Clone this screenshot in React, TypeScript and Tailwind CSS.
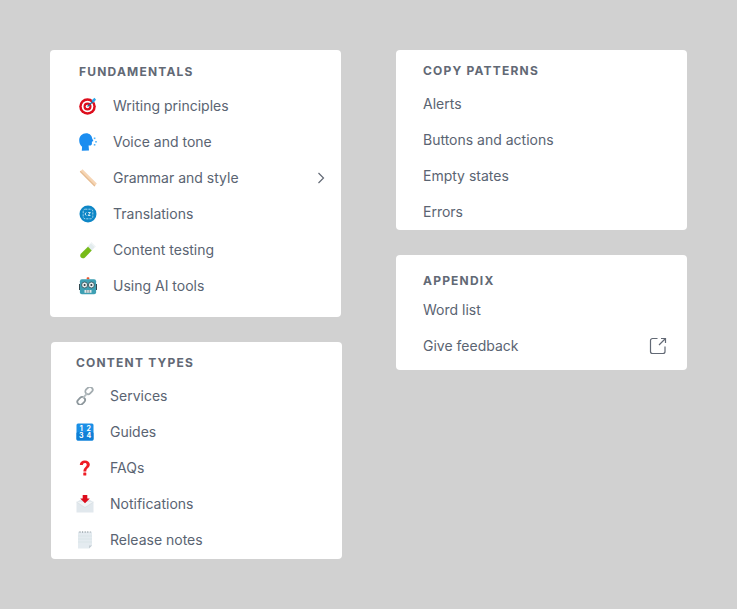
import React from 'react';

const font = { fontFamily: 'Inter, "Noto Sans", sans-serif' };

function Target() {
  return (
    <svg width="18" height="18" viewBox="0 0 18 18">
      <circle cx="8.500" cy="9.500" r="8.300" fill="#dd0d1c" />
      <circle cx="8.500" cy="9.500" r="5.800" fill="#fff" />
      <circle cx="8.500" cy="9.500" r="4" fill="#dd0d1c" />
      <circle cx="8.500" cy="9.500" r="1.800" fill="#fff" />
      <path d="M8.500 9.500 15 3.500" stroke="#1f6f9f" strokeWidth="1.300" />
      <path d="M12.500 3.500 15.500 .8l1.500 2-2.500 3z" fill="#2aa6e8" />
    </svg>
  );
}

function Speaking() {
  return (
    <svg width="18" height="18" viewBox="0 0 18 18">
      <path d="M7.200.2c3.200 0 5.700 2.200 5.900 5l1.300 2.800-1.500.7v2.100c0 1.100-.9 1.800-2 1.800H9.600l.4 4.800-7.200.4.300-4C1.200 12 .2 10 .2 7.200.2 3.300 3.200.2 7.200.2z" fill="#1b8df0" />
      <g fill="#53b4f7">
        <rect x="14.800" y="4.500" width="1.600" height="1.600" />
        <rect x="16.200" y="8" width="1.600" height="1.600" />
        <rect x="14.800" y="11" width="1.600" height="1.600" />
      </g>
    </svg>
  );
}

function Ruler() {
  return (
    <svg width="18" height="18" viewBox="0 0 18 18">
      <path d="M3.500.2 17.800 14.500 15.500 17.500 .8 2.800z" fill="#f6d5b4" />
      <path d="M.8 2.800 15.500 17.500l.8-1L1.600 1.800z" fill="#e5bb93" />
    </svg>
  );
}

function Translate() {
  return (
    <svg width="18" height="18" viewBox="0 0 18 18">
      <circle cx="9" cy="9" r="8.500" fill="#0d86c6" />
      <rect x="4.200" y="4.200" width="9.600" height="9.600" rx="2" fill="none" stroke="#9ed2ec" strokeWidth="1" strokeDasharray="2.200 1" />
      <path d="M7.200 7.500 6 9l1.200 1.500M9.200 7.500h2.200l-2.200 3h2.200" fill="none" stroke="#e4f3fa" strokeWidth=".9" />
    </svg>
  );
}

function TestTube() {
  return (
    <svg width="18" height="18" viewBox="0 0 18 18">
      <path d="M12.500 1.500 16.500 5.500 6 16.500c-1.200 1.100-3 1.100-4 .1s-1-2.800.1-4z" fill="#e3ecee" />
      <path d="M9 5.800 12.700 9.500 6 16.500c-1.200 1.100-3 1.100-4 .1s-1-2.800.1-4z" fill="#77bb18" />
      <path d="M12.500 1l4.500 4.500-1 1-4.500-4.500z" fill="#f1f5f6" />
    </svg>
  );
}

function Robot() {
  return (
    <svg width="18" height="18" viewBox="0 0 18 18">
      <rect x="7.600" y=".2" width="2.800" height="2.400" rx="1" fill="#e8552d" />
      <rect x="-.6" y="7" width="2.400" height="6" fill="#333f45" />
      <rect x="16.200" y="7" width="2.400" height="6" fill="#333f45" />
      <rect x=".9" y="2.200" width="16.200" height="15" rx="2" fill="#3e9fb3" />
      <circle cx="5.600" cy="8" r="3" fill="#e6eef0" stroke="#2f4a52" strokeWidth=".8" />
      <circle cx="12.400" cy="8" r="3" fill="#e6eef0" stroke="#2f4a52" strokeWidth=".8" />
      <circle cx="5.600" cy="8" r="1" fill="#2f3a40" />
      <circle cx="12.400" cy="8" r="1" fill="#2f3a40" />
      <rect x="5.500" y="13" width="7" height="2.800" fill="#dfe8ea" />
      <path d="M7.800 13v2.800M10.200 13v2.800" stroke="#5d7177" strokeWidth=".7" />
    </svg>
  );
}

function LinkIcon() {
  return (
    <svg width="18" height="18" viewBox="0 0 18 18" fill="none">
      <rect x="9" y=".8" width="8" height="5.600" rx="2.800" transform="rotate(-45 13 3.600)" stroke="#a3acb0" strokeWidth="1.800" />
      <rect x="1" y="11" width="8.400" height="5.800" rx="2.900" transform="rotate(-45 5.200 13.900)" stroke="#8d979c" strokeWidth="1.800" />
      <path d="M6.800 11.200l4.400-4.800" stroke="#b6bec1" strokeWidth="1.800" />
    </svg>
  );
}

function Numbers() {
  return (
    <svg width="18" height="18" viewBox="0 0 18 18">
      <rect x=".5" y=".5" width="17" height="17" rx="1.500" fill="#1a8fe6" />
      <rect x=".5" y="9" width="17" height="8.500" rx="1.500" fill="#0f7fd6" />
      <g fill="#fff" fontSize="7" fontWeight="700" fontFamily="Inter, sans-serif" textAnchor="middle">
        <text x="5.200" y="7.600">1</text>
        <text x="12.800" y="7.600">2</text>
        <text x="5.200" y="15.400">3</text>
        <text x="12.800" y="15.400">4</text>
      </g>
    </svg>
  );
}

function Question() {
  return (
    <svg width="18" height="18" viewBox="0 0 18 18">
      <path d="M3.800 6C3.800 3 6 1.500 8.800 1.500c3 0 5 1.700 5 4.100 0 3.300-3.500 3.500-3.500 6.900H7.400c0-4 3.300-4.500 3.300-6.800 0-1-.7-1.600-1.800-1.600-1.200 0-2 .8-2 2z" fill="#ee1c25" />
      <rect x="7.300" y="13.400" width="3" height="3.200" rx=".6" fill="#ee1c25" />
    </svg>
  );
}

function Mail() {
  return (
    <svg width="18" height="18" viewBox="0 0 18 18">
      <path d="M.5 7 9 2l8.500 5v10.500H.5z" fill="#e1e8ed" />
      <path d="M.5 7 9 12.500 17.500 7" fill="#f1f4f6" stroke="#ced6db" strokeWidth=".5" />
      <path d="M6.700 0h4.600v3.500h2.500L9 8.200 4.200 3.500h2.500z" fill="#dd0d1c" />
    </svg>
  );
}

function Notepad() {
  return (
    <svg width="18" height="18" viewBox="0 0 18 18">
      <path d="M2 .8h14v13.700l-3 3H2z" fill="#e4ebf0" />
      <path d="M13 17.500v-3h3z" fill="#c3ccd2" />
      <path d="M2 5h14M2 8h14M2 11h14" stroke="#d3dce2" strokeWidth=".5" />
      <path d="M3.500 1h11" stroke="#69757c" strokeWidth="1" strokeDasharray="1 1.600" />
    </svg>
  );
}

function Row({ icon, label, right }: { icon?: React.ReactNode; label: string; right?: React.ReactNode }) {
  return (
    <div className="flex h-9 items-center text-[14px] text-[#5a6472]">
      {icon && <span className="mr-[16px] flex h-[18px] w-[18px] shrink-0 items-center justify-center">{icon}</span>}
      <span className="flex-1 pb-[2px]">{label}</span>
      {right}
    </div>
  );
}

function Heading({ children }: { children: string }) {
  return <div className="h-4 text-[12px] leading-4 font-bold tracking-[0.1em] text-[#626975]">{children}</div>;
}

export default function App() {
  return (
    <div className="flex h-[609px] w-[737px] gap-[54px] bg-[#d1d1d1] pt-[50px] pl-[50px]" style={font}>
      <div className="flex w-[292px] flex-col gap-[25px]">
        <section className="w-[291px] rounded-[4px] bg-white pt-[14px] pr-[14px] pb-[13px] pl-[29px]">
          <Heading>FUNDAMENTALS</Heading>
          <div className="mt-2">
            <Row icon={<Target />} label="Writing principles" />
            <Row icon={<Speaking />} label="Voice and tone" />
            <Row
              icon={<Ruler />}
              label="Grammar and style"
              right={
                <svg width="10" height="12" viewBox="0 0 10 12" fill="none" stroke="#626975" strokeWidth="1.200">
                  <path d="M1.500 1 6.500 6l-5 5" />
                </svg>
              }
            />
            <Row icon={<Translate />} label="Translations" />
            <Row icon={<TestTube />} label="Content testing" />
            <Row icon={<Robot />} label="Using AI tools" />
          </div>
        </section>
        <section className="ml-px w-[291px] rounded-[4px] bg-white pt-[13px] pb-px pl-[25px]">
          <Heading>CONTENT TYPES</Heading>
          <div className="mt-[7px]">
            <Row icon={<LinkIcon />} label="Services" />
            <Row icon={<Numbers />} label="Guides" />
            <Row icon={<Question />} label="FAQs" />
            <Row icon={<Mail />} label="Notifications" />
            <Row icon={<Notepad />} label="Release notes" />
          </div>
        </section>
      </div>
      <div className="flex w-[291px] flex-col gap-[25px]">
        <section className="rounded-[4px] bg-white pt-[13px] pl-[27px]">
          <Heading>COPY PATTERNS</Heading>
          <div className="mt-[7px]">
            <Row label="Alerts" />
            <Row label="Buttons and actions" />
            <Row label="Empty states" />
            <Row label="Errors" />
          </div>
        </section>
        <section className="rounded-[4px] bg-white pt-[18px] pr-[20px] pb-[6px] pl-[27px]">
          <Heading>APPENDIX</Heading>
          <div className="mt-[3px]">
            <Row label="Word list" />
            <Row
              label="Give feedback"
              right={
                <svg width="18" height="18" viewBox="0 0 18 18" fill="none" stroke="#626975" strokeWidth="1.200">
                  <path d="M8.500 1.500H3.500A2 2 0 0 0 1.500 3.500v11a2 2 0 0 0 2 2H14a2 2 0 0 0 2-2V9.500" />
                  <path d="M10 8l6.500-6.500M12 1.500h4.500V6" />
                </svg>
              }
            />
          </div>
        </section>
      </div>
    </div>
  );
}
